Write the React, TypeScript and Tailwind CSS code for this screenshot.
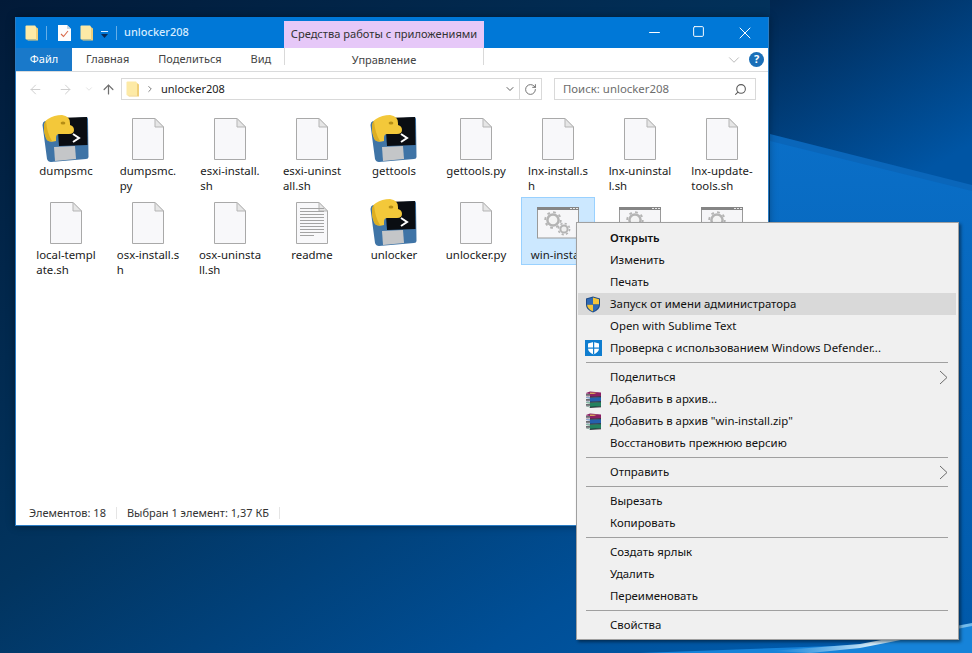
import { ArrowLeft, ArrowRight, ArrowUp, ChevronDown, ChevronRight, Minus, RotateCw, Search, Square, X } from "lucide-react";

const font = "font-['Noto_Sans','Noto_Sans_CJK_SC',sans-serif]";

type IconKind = "py" | "file" | "text" | "gears";

const files: { lines: string[]; icon: IconKind; selected?: boolean }[] = [
  { lines: ["dumpsmc"], icon: "py" },
  { lines: ["dumpsmc.", "py"], icon: "file" },
  { lines: ["esxi-install.", "sh"], icon: "file" },
  { lines: ["esxi-uninst", "all.sh"], icon: "file" },
  { lines: ["gettools"], icon: "py" },
  { lines: ["gettools.py"], icon: "file" },
  { lines: ["lnx-install.s", "h"], icon: "file" },
  { lines: ["lnx-uninstal", "l.sh"], icon: "file" },
  { lines: ["lnx-update-", "tools.sh"], icon: "file" },
  { lines: ["local-templ", "ate.sh"], icon: "file" },
  { lines: ["osx-install.s", "h"], icon: "file" },
  { lines: ["osx-uninsta", "ll.sh"], icon: "file" },
  { lines: ["readme"], icon: "text" },
  { lines: ["unlocker"], icon: "py" },
  { lines: ["unlocker.py"], icon: "file" },
  { lines: ["win-install"], icon: "gears", selected: true },
  { lines: ["win-uninstall"], icon: "gears" },
  { lines: ["win-update"], icon: "gears" },
];

function Wallpaper() {
  return (
    <svg className="absolute inset-0" width="972" height="653" viewBox="0 0 972 653">
      <defs>
        <linearGradient id="base" x1="0" y1="0" x2="1" y2="1">
          <stop offset="0" stopColor="#021a38" />
          <stop offset="0.45" stopColor="#02345f" />
          <stop offset="0.75" stopColor="#004f97" />
          <stop offset="1" stopColor="#0060b4" />
        </linearGradient>
        <linearGradient id="upper" x1="0" y1="0" x2="0.6" y2="1">
          <stop offset="0" stopColor="#01264f" />
          <stop offset="1" stopColor="#0055a4" />
        </linearGradient>
        <linearGradient id="lower" x1="0" y1="0" x2="0" y2="1">
          <stop offset="0" stopColor="#0a6fc8" />
          <stop offset="1" stopColor="#0058a8" />
        </linearGradient>
        <linearGradient id="streak" x1="0" y1="0" x2="1" y2="0">
          <stop offset="0" stopColor="#7cc4f0" stopOpacity="0" />
          <stop offset="0.5" stopColor="#d3ecfb" />
          <stop offset="1" stopColor="#6db9ec" />
        </linearGradient>
      </defs>
      <rect width="972" height="653" fill="url(#base)" />
      <rect x="770" width="202" height="190" fill="url(#upper)" />
      <polygon points="770,135 972,187 972,653 770,653" fill="url(#lower)" />
      <polygon points="770,134 972,185 972,191 770,141" fill="#0a66ba" />
      <polygon points="640,653 860,645 972,624 972,653" fill="#1683d9" />
      <polygon points="770,651 860,644 972,623 972,626 860,648 810,653" fill="url(#streak)" />
    </svg>
  );
}

function Folder({ className }: { className?: string }) {
  return (
    <svg className={className} width="14" height="16" viewBox="0 0 14 16">
      <path d="M0.5 1.5Q0.5 0.5 1.5 0.5H10L11 1.5V14.5H1.5Q0.5 14.5 0.5 13.5Z" fill="#fdeaa6" />
      <path d="M11 2L13 3.5V15.5H3L1.5 14.5H11Z" fill="#efcf7a" />
    </svg>
  );
}

function PythonIcon() {
  return (
    <svg className="shrink-0" width="48" height="48" viewBox="0 0 48 48">
      <path d="M3 6L44 2Q46 2 46 4L46.5 42Q46.5 44 44 44L9 47Q6 47 5 44L0.5 10Q0.5 7 3 6Z" fill="#3f74a6" />
      <path d="M15 3L45 2L45.5 30L17 31Z" fill="#0a0d12" />
      <path d="M12 32L33 31L34 44L13 46Z" fill="#c4c6c8" />
      <path d="M6 4Q12 0 20 0Q28 1 28 8V10Q32 11 32 15Q32 19 27 19H17Q14 19 14 23V26Q8 28 5 25Q2 20 2 12Q2 6 6 4Z" fill="#f3c83a" />
      <path d="M5 25Q2 20 2 12Q2 8 4 6Q5 18 10 26Q7 27 5 25Z" fill="#dcae22" />
      <ellipse cx="21" cy="8" rx="2.4" ry="1.6" fill="#b58d16" />
      <path d="M31 19L37 23L31 27" fill="none" stroke="#ffffff" strokeWidth="2" />
    </svg>
  );
}

function FileIcon({ lines }: { lines?: boolean }) {
  return (
    <svg className="shrink-0" width="32" height="42" viewBox="0 0 32 42">
      <path d="M0.5 0.5H23L31.5 9V41.5H0.5Z" fill="#f8f8fa" stroke="#a9a9a9" />
      <path d="M23 0.5V9H31.5Z" fill="#e6e6e6" stroke="#b5b5b5" />
      {lines &&
        [6, 9, 12, 15, 18, 21, 24, 27, 30, 33].map((y) => (
          <rect key={y} x="4" y={y} width={y === 33 ? 14 : 24} height="1" fill="#a3a3a3" />
        ))}
    </svg>
  );
}

function GearsIcon() {
  return (
    <svg className="shrink-0" width="42" height="32" viewBox="0 0 42 32">
      <rect x="0.5" y="1" width="41" height="30" fill="#f6f6f8" stroke="#9a9a9a" />
      <rect x="0" y="0" width="42" height="3" fill="#858585" />
      <rect x="33" y="1" width="2" height="1" fill="#e8e8e8" />
      <rect x="36" y="1" width="2" height="1" fill="#e8e8e8" />
      <rect x="39" y="1" width="2" height="1" fill="#e8e8e8" />
      <circle cx="16" cy="13" r="5.6" fill="#f4f4f4" stroke="#b4b4b4" strokeWidth="2.5" />
      <circle cx="16" cy="13" r="7.8" fill="none" stroke="#b4b4b4" strokeWidth="1.8" strokeDasharray="2.8 3.3" />
      <circle cx="27" cy="22" r="3.6" fill="#f0f0f0" stroke="#b4b4b4" strokeWidth="2" />
      <circle cx="27" cy="22" r="5.6" fill="none" stroke="#b4b4b4" strokeWidth="1.6" strokeDasharray="2.2 2.2" />
    </svg>
  );
}

function FileCell({ lines, icon, selected }: { lines: string[]; icon: IconKind; selected?: boolean }) {
  return (
    <div
      className={`flex flex-col items-center pt-[4px] border ${
        selected ? "h-[68px] bg-[#cce8ff] border-[#99d1ff]" : "h-[82px] border-transparent"
      }`}
    >
      <div className="h-[42px] flex items-center justify-center">
        {icon === "py" && <PythonIcon />}
        {icon === "file" && <FileIcon />}
        {icon === "text" && <FileIcon lines />}
        {icon === "gears" && <GearsIcon />}
      </div>
      <div className="mt-[3px] text-[11.4px] leading-[15px] text-[#1a1a1a] whitespace-nowrap">
        {lines.map((l) => (
          <div key={l}>{l}</div>
        ))}
      </div>
    </div>
  );
}

function Shield() {
  return (
    <svg width="16" height="17" viewBox="0 0 16 17">
      <path d="M8 0.5L15 2.5V9Q15 14 8 16.5Q1 14 1 9V2.5Z" fill="#1d4a86" />
      <path d="M8 1.5L14 3.2V8.5H8Z" fill="#f4c53a" />
      <path d="M8 8.5H2Q2.4 13.2 8 15.4Z" fill="#f4c53a" />
      <path d="M8 1.5L2 3.2V8.5H8Z" fill="#2f69b4" />
      <path d="M8 8.5H14Q13.6 13.2 8 15.4Z" fill="#2f69b4" />
    </svg>
  );
}

function Defender() {
  return (
    <svg width="17" height="16" viewBox="0 0 17 16">
      <rect width="17" height="16" fill="#0f7dcf" />
      <path d="M8.5 2L14 3.5V8.5Q14 12 8.5 14.5Q3 12 3 8.5V3.5Z" fill="#ffffff" />
      <rect x="8" y="2" width="1.2" height="12.5" fill="#0f7dcf" />
      <rect x="3" y="7.5" width="11" height="1.2" fill="#0f7dcf" />
    </svg>
  );
}

function Rar() {
  return (
    <svg width="17" height="17" viewBox="0 0 17 17">
      <path d="M1 2L5 0.5L16 1.5V5.5L5 6L1 5Z" fill="#8c1f63" />
      <path d="M5 1.5L12 1.8L9 3L5 3Z" fill="#d5a25c" />
      <path d="M1 6.5L5 6.5L16 6V10.5L5 11L1 10Z" fill="#2460ad" />
      <path d="M1 11.5L5 11.5L16 11V15.5L5 16.5L1 15Z" fill="#23825f" />
      <path d="M1 2.5L5 3V6L1 5ZM1 7L5 7.5V11L1 10ZM1 12L5 12.5V16L1 15Z" fill="#f2f2f2" />
      <path d="M1 3.5H5M1 4.7H5M1 8.5H5M1 9.7H5M1 13.5H5M1 14.7H5" stroke="#30303a" strokeWidth="0.7" />
      <path d="M5 6.2L16 5.7M5 11.2L16 10.7M5 16.3L16 15.8" stroke="#15151f" strokeWidth="0.9" />
    </svg>
  );
}

function Sep() {
  return (
    <div className="h-[7px] flex items-center pl-[8px] pr-[8px]">
      <div className="h-px w-full bg-[#a0a0a0]" />
    </div>
  );
}

function Item({
  label,
  icon,
  bold,
  active,
  arrow,
}: {
  label: string;
  icon?: React.ReactNode;
  bold?: boolean;
  active?: boolean;
  arrow?: boolean;
}) {
  return (
    <div className={`h-[22px] flex items-center ${active ? "bg-[#d9d9d9]" : ""}`}>
      <div className="w-[32px] flex justify-center pr-[2px]">{icon}</div>
      <span className={`flex-1 text-[11.4px] text-[#111] whitespace-nowrap ${bold ? "font-semibold" : ""}`}>{label}</span>
      {arrow && (
        <svg className="mr-[8px]" width="9" height="15" viewBox="0 0 9 15">
          <path d="M1 1L8 7.5L1 14" fill="none" stroke="#6b6b6b" />
        </svg>
      )}
    </div>
  );
}

function ContextMenu() {
  return (
    <div className="absolute left-[576px] top-[222px] w-[383px] h-[418px] bg-[#f0f0f0] border border-[#a0a0a0] shadow-[2px_2px_3px_rgba(0,0,0,0.45)] pl-[1px] pr-[2px] py-[4px]">
      <Item label="Открыть" bold />
      <Item label="Изменить" />
      <Item label="Печать" />
      <Item label="Запуск от имени администратора" icon={<Shield />} active />
      <Item label="Open with Sublime Text" />
      <Item label="Проверка с использованием Windows Defender..." icon={<Defender />} />
      <Sep />
      <Item label="Поделиться" arrow />
      <Item label="Добавить в архив..." icon={<Rar />} />
      <Item label='Добавить в архив "win-install.zip"' icon={<Rar />} />
      <Item label="Восстановить прежнюю версию" />
      <Sep />
      <Item label="Отправить" arrow />
      <Sep />
      <Item label="Вырезать" />
      <Item label="Копировать" />
      <Sep />
      <Item label="Создать ярлык" />
      <Item label="Удалить" />
      <Item label="Переименовать" />
      <Sep />
      <Item label="Свойства" />
    </div>
  );
}

function TitleBar() {
  return (
    <div className="h-[31px] bg-[#0078d7] flex items-start text-white shrink-0">
      <div className="w-[268px] h-full flex items-center pl-[9px]">
        <Folder />
        <div className="ml-[7px] h-[14px] w-px bg-[#66aee7]" />
        <svg className="ml-[11px]" width="13" height="16" viewBox="0 0 13 16">
          <path d="M0 0H9L13 4V16H0Z" fill="#fdfdfd" />
          <path d="M9 0V4H13Z" fill="#cfd8e0" />
          <path d="M3 9L5.5 11.5L10 6" fill="none" stroke="#d9694a" strokeWidth="1.1" />
        </svg>
        <Folder className="ml-[9px]" />
        <svg className="ml-[6px] mt-[5px]" width="9" height="8" viewBox="0 0 9 8">
          <rect x="1" y="0" width="7" height="1" fill="#dfefff" />
          <path d="M1 3H8L4.5 7Z" fill="#0a2a55" />
        </svg>
        <div className="ml-[7px] h-[14px] w-px bg-[#66aee7]" />
        <span className="ml-[7px] text-[11px] font-medium text-[#d6ecff]">unlocker208</span>
      </div>
      <div className="mt-[4px] w-[200px] h-[27px] bg-[#e6c8f8] flex items-center justify-center text-[11.1px] text-[#333] whitespace-nowrap">
        Средства работы с приложениями
      </div>
      <div className="flex-1 h-full flex justify-end items-center pr-[13px]">
        <Minus size={17} strokeWidth={1.4} className="mr-[29px]" />
        <Square size={13} strokeWidth={1.8} className="mr-[30px] -mt-[2px]" />
        <X size={20} strokeWidth={1.2} />
      </div>
    </div>
  );
}

function TabRow() {
  return (
    <div className="h-[24px] flex items-stretch border-b border-[#dadbdc] text-[11px] text-[#444] shrink-0">
      <div className="w-[268px] flex items-stretch">
        <div className="w-[56px] bg-[#1979ca] text-white flex items-center justify-center">Файл</div>
        <span className="ml-[14px] flex items-center">Главная</span>
        <span className="ml-[29px] flex items-center">Поделиться</span>
        <span className="ml-[29px] flex items-center">Вид</span>
      </div>
      <div className="w-[200px] h-[17px] border-x border-[#d9d9d9] flex items-center justify-center self-start pt-[7px]">
        Управление
      </div>
      <div className="flex-1 flex items-center justify-end pr-[4px]">
        <ChevronDown size={18} strokeWidth={0.9} className="mr-[6px] text-[#9a9a9a]" />
        <div className="w-[15px] h-[15px] rounded-full bg-[#1a6fb8] text-white text-[11px] font-bold flex items-center justify-center">?</div>
      </div>
    </div>
  );
}

function AddressRow() {
  return (
    <div className="h-[34px] flex items-center shrink-0 pl-[12px] pr-[12px] text-[11.4px]">
      <ArrowLeft size={15} strokeWidth={1.6} className="text-[#cfcfcf]" />
      <ArrowRight size={15} strokeWidth={1.6} className="ml-[15px] text-[#cfcfcf]" />
      <ChevronDown size={10} strokeWidth={1.4} className="ml-[11px] text-[#cfcfcf]" />
      <ArrowUp size={15} strokeWidth={2} className="ml-[7px] text-[#707070]" />
      <div className="ml-[5px] w-[421px] h-[22px] border border-[#d9d9d9] flex items-center text-[#1a1a1a]">
        <Folder className="ml-[4px]" />
        <ChevronRight size={10} strokeWidth={1.8} className="ml-[5px] text-[#555]" />
        <span className="ml-[6px] text-[11px]">unlocker208</span>
        <div className="flex-1" />
        <ChevronDown size={12} strokeWidth={2} className="text-[#606060] mr-[3px]" />
        <div className="w-px h-full bg-[#d9d9d9]" />
        <RotateCw size={13} strokeWidth={1.6} className="mx-[4px] text-[#606060]" />
      </div>
      <div className="ml-[12px] w-[202px] h-[22px] border border-[#d9d9d9] flex items-center justify-between pl-[8px] pr-[8px] text-[#6d6d6d]">
        <span>Поиск: unlocker208</span>
        <Search size={13} strokeWidth={2} className="-scale-x-100 text-[#5a5a5a]" />
      </div>
    </div>
  );
}

export default function App() {
  return (
    <div className={`relative w-[972px] h-[653px] overflow-hidden ${font}`}>
      <Wallpaper />
      <div className="absolute left-[15px] top-[17px] w-[754px] h-[509px] border border-t-0 border-[#2a7cc4] bg-white flex flex-col shadow-[0_0_8px_rgba(0,0,0,0.35)]">
        <TitleBar />
        <TabRow />
        <AddressRow />
        <div className="flex-1 grid grid-cols-[repeat(9,74px)] auto-rows-[82px] gap-x-[8px] gap-y-[2px] pl-[13px] pt-[7px] content-start">
          {files.map((f) => (
            <FileCell key={f.lines[0]} {...f} />
          ))}
        </div>
        <div className="h-[24px] flex items-center pl-[13px] text-[11px] text-[#333] shrink-0">
          <span>Элементов: 18</span>
          <div className="ml-[10px] w-px h-[12px] bg-[#e5e5e5]" />
          <span className="ml-[10px]">Выбран 1 элемент: 1,37 КБ</span>
          <div className="ml-[10px] w-px h-[12px] bg-[#e5e5e5]" />
        </div>
      </div>
      <ContextMenu />
    </div>
  );
}
